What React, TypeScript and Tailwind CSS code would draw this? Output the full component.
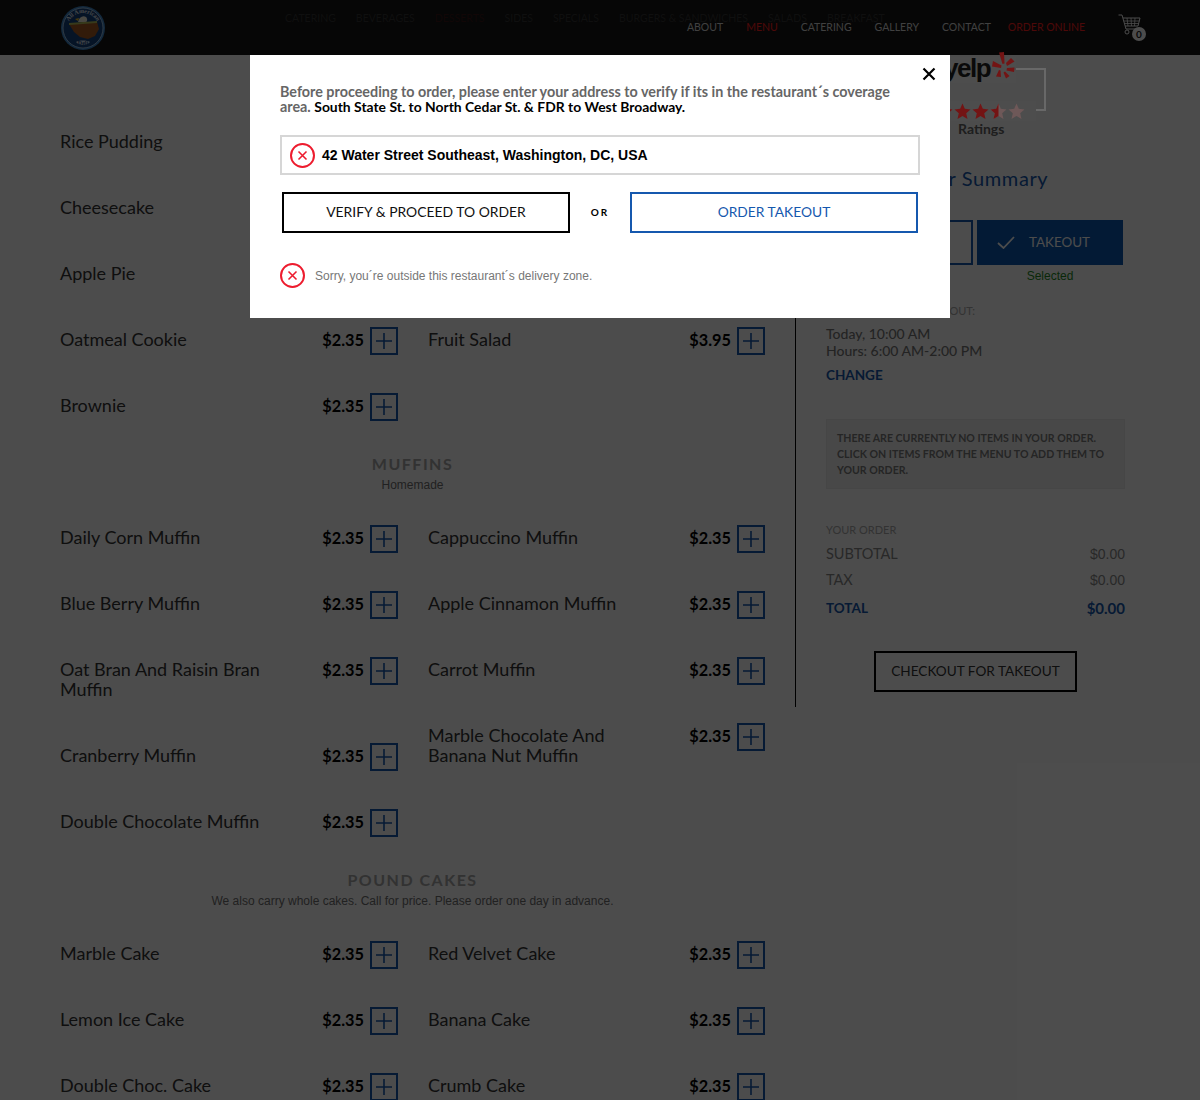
import React from "react";

const F = "font-['Lato','Noto_Sans',sans-serif]";

type Item = { n: string; p: string };

function Row({ n, p }: Item) {
  return (
    <div className="flex items-start mb-[46px]">
      <div className="flex-1 -mt-[1px] pb-[1px] pr-[30px] text-[18px] leading-[20px] text-[#333]">{n}</div>
      <div className="flex items-start h-[20px]">
        <span className="text-[16.3px] leading-[20px] font-bold text-black mr-[6px]">{p}</span>
        <button className="w-[28px] h-[28px] -mt-[3px] border-2 border-[#1558ae] flex items-center justify-center">
          <svg width="18" height="18" viewBox="0 0 18 18">
            <path d="M9 1V17M1 9H17" stroke="#1558ae" strokeWidth="1.6" />
          </svg>
        </button>
      </div>
    </div>
  );
}

function Heading({ t, s }: { t: string; s: string }) {
  return (
    <div className="h-[74px] -mt-[8px] text-center">
      <div className="h-[20px] text-[16px] leading-[20px] font-bold tracking-[1.5px] text-[#a8a8a8]">{t}</div>
      <div className="mt-[4px] h-[14px] text-[12px] leading-[14px] text-[#6f6f6f] font-['Liberation_Sans',sans-serif]">{s}</div>
    </div>
  );
}

function Cols({ a, b, lead = 0 }: { a: Item[]; b: Item[]; lead?: number }) {
  return (
    <div className="flex gap-[30px]">
      <div className="w-[338px]">
        {a.map((i) => (
          <Row key={i.n} {...i} />
        ))}
      </div>
      <div className="w-[337px]">
        {lead > 0 && <div className="h-[198px]" />}
        {b.map((i) => (
          <Row key={i.n} {...i} />
        ))}
      </div>
    </div>
  );
}

function RedX() {
  return (
    <svg width="25" height="25" viewBox="0 0 25 25" className="shrink-0">
      <circle cx="12.5" cy="12.5" r="11.5" fill="none" stroke="#ed1c2e" strokeWidth="2" />
      <path d="M8.5 8.5L16.5 16.5M16.5 8.5L8.5 16.5" stroke="#ed1c2e" strokeWidth="1.6" />
    </svg>
  );
}

function Star({ half, pale }: { half?: boolean; pale?: boolean }) {
  const d = "M8.5 0.5L10.8 5.8L16.5 6.4L12.2 10.2L13.5 16L8.5 13L3.5 16L4.8 10.2L0.5 6.4L6.2 5.8Z";
  return (
    <svg width="17" height="17" viewBox="0 0 17 17" className="shrink-0">
      <path d={d} fill={pale || half ? "#6e5858" : "#731414"} />
      {half && <path d="M8.5 0.5L6.2 5.8L0.5 6.4L4.8 10.2L3.5 16L8.5 13Z" fill="#731414" />}
    </svg>
  );
}

function Logo() {
  return (
    <svg width="46" height="46" viewBox="0 0 46 46">
      <circle cx="23" cy="23" r="22" fill="#3f86c8" />
      <circle cx="23" cy="23" r="20" fill="#16447f" stroke="#b9d4ec" strokeWidth="0.8" />
      <path d="M9 19L37 17L39 24L35 31L28 34L20 32L14 27Z" fill="#a85a22" />
      <path d="M18 17C19 12 23 10 26 12C28 14 27 17 26 17Z" fill="#f4f0e0" />
      <path d="M19 13L15 14L18 16Z" fill="#f3c22b" />
      <path d="M9 18L37 16L37 18L9 20Z" fill="#b8c25a" />
      <path d="M16 37C19 35 27 35 30 37C27 41 19 41 16 37Z" fill="#cfe0ef" />
      <defs>
        <path id="logoArc" d="M7 24A16 16 0 0 1 39 24" />
      </defs>
      <text fontSize="6" fontWeight="700" fill="#e8eef5" fontFamily="Liberation Serif, serif">
        <textPath href="#logoArc" startOffset="50%" textAnchor="middle">All American</textPath>
      </text>
      <text x="23" y="40" fontSize="6" fontWeight="700" fill="#16447f" textAnchor="middle" fontFamily="Liberation Serif, serif">Deli</text>
    </svg>
  );
}

function Cart() {
  return (
    <div className="relative w-[28px] h-[24px]">
      <svg width="24" height="22" viewBox="0 0 24 22" fill="none" stroke="#fff" strokeWidth="1">
        <path d="M0.5 1H4L8 15H20" />
        <path d="M5 4H22L20 12H7.2" />
        <path d="M9 4L10 12M13 4L13.5 12M17 4L16.5 12M5.8 7H21.4M6.6 9.5H20.8" strokeWidth="0.8" />
        <circle cx="9" cy="18" r="2" />
      </svg>
      <div className="absolute right-0 bottom-[-3px] w-[14px] h-[14px] rounded-full bg-white text-[#222] text-[10px] leading-[14px] font-bold text-center">0</div>
    </div>
  );
}

const s1: Item[] = [
  { n: "Rice Pudding", p: "$2.35" },
  { n: "Cheesecake", p: "$2.35" },
  { n: "Apple Pie", p: "$2.35" },
  { n: "Oatmeal Cookie", p: "$2.35" },
  { n: "Brownie", p: "$2.35" },
];
const m1: Item[] = [
  { n: "Daily Corn Muffin", p: "$2.35" },
  { n: "Blue Berry Muffin", p: "$2.35" },
  { n: "Oat Bran And Raisin Bran Muffin", p: "$2.35" },
  { n: "Cranberry Muffin", p: "$2.35" },
  { n: "Double Chocolate Muffin", p: "$2.35" },
];
const m2: Item[] = [
  { n: "Cappuccino Muffin", p: "$2.35" },
  { n: "Apple Cinnamon Muffin", p: "$2.35" },
  { n: "Carrot Muffin", p: "$2.35" },
  { n: "Marble Chocolate And Banana Nut Muffin", p: "$2.35" },
];
const p1: Item[] = [
  { n: "Marble Cake", p: "$2.35" },
  { n: "Lemon Ice Cake", p: "$2.35" },
  { n: "Double Choc. Cake", p: "$2.35" },
];
const p2: Item[] = [
  { n: "Red Velvet Cake", p: "$2.35" },
  { n: "Banana Cake", p: "$2.35" },
  { n: "Crumb Cake", p: "$2.35" },
];

const nav = ["ABOUT", "MENU", "CATERING", "GALLERY", "CONTACT"];
const faint = ["CATERING", "BEVERAGES", "DESSERTS", "SIDES", "SPECIALS", "BURGERS & SANDWICHES", "SALADS", "BREAKFAST"];

export default function App() {
  return (
    <div className={`relative h-[1100px] overflow-hidden bg-white ${F}`}>
      <header className="relative h-[55px] bg-[#141414] flex items-center pl-[60px] pr-[54px] z-10">
        <Logo />
        <div className="absolute left-[285px] top-[11px] flex gap-[20px] text-[10.5px] leading-[14px] text-[#333]">
          {faint.map((f) => (
            <span key={f} className={f === "DESSERTS" ? "text-[#3a1414]" : ""}>{f}</span>
          ))}
        </div>
        <nav className="relative ml-auto flex items-center gap-[23px] text-[10.5px] text-[#d8d8d8]">
          {nav.map((n) => (
            <span key={n} className={n === "MENU" ? "text-[#ff1f1f]" : ""}>{n}</span>
          ))}
          <span className="-ml-[6px] text-[#ff1f1f]">ORDER ONLINE</span>
        </nav>
        <div className="relative ml-[33px] -mt-[3px]">
          <Cart />
        </div>
      </header>

      <div className="flex pl-[60px]">
        <main className="w-[705px] pt-[77px]">
          <Cols a={s1} b={[{ n: "Fruit Salad", p: "$3.95" }]} lead={1} />
          <Heading t="MUFFINS" s="Homemade" />
          <Cols a={m1} b={m2} />
          <Heading t="POUND CAKES" s="We also carry whole cakes. Call for price. Please order one day in advance." />
          <Cols a={p1} b={p2} />
        </main>

        <aside className="ml-[30px] w-[330px] h-[652px] border-l border-black pl-[30px]">
          <div className="relative z-[25] h-[111px]">
            <div className="absolute left-[79px] top-[13px] w-[141px] h-[43px] border-2 border-[#686868]" />
            <div className="absolute left-[110px] top-[2px] w-[80px] h-[26px] bg-[#4d4d4d] flex items-center">
              <span className="ml-[8px] -mt-[4px] text-[26px] leading-[26px] font-bold text-[#0a0a0a] font-['Liberation_Sans',sans-serif] tracking-[-1.5px]">yelp</span>
              <svg width="24" height="27" viewBox="0 0 24 27" className="absolute left-[55px] -top-[5px]">
                <g fill="#731414">
                  <path d="M8 0.5L13 0L13.5 11.5L11.5 12Z" />
                  <path d="M15 11L20 6L23.5 9.5L16 14Z" />
                  <path d="M16 16L23.5 15.5L23 20L15.5 18.5Z" />
                  <path d="M14 19.5L18.5 24L15 26.5L12.5 20.5Z" />
                  <path d="M2 9L10.5 13.5L10 16L1 14.5Z" />
                  <path d="M9.5 18.5L10 25L5 24.5L8 18Z" />
                </g>
              </svg>
            </div>
            <div className="absolute left-[110px] top-[46px] h-[20px] pr-[11px] bg-[#4d4d4d] flex items-center gap-[1px]">
              <Star />
              <Star />
              <Star />
              <Star half />
              <Star pale />
            </div>
          </div>
          <div className="-mt-[45px] h-[45px] pl-[132px] text-[14px] leading-[16px] font-bold text-[#666]">Ratings</div>
          <div className="h-[26px] pl-[28px] whitespace-nowrap text-[20px] leading-[24px] text-[#1558ae] tracking-[0.6px]">Your Order Summary</div>
          <div className="mt-[28px] flex gap-[4px] pl-[1px]">
            <div className="w-[146px] h-[45px] border-2 border-[#1558ae]" />
            <div className="w-[146px] h-[45px] pb-[1px] bg-[#0a58b2] flex items-center pl-[20px] text-white text-[13.4px]">
              <svg width="18" height="13" viewBox="0 0 18 13" className="mr-[14px]">
                <path d="M1 7L6.5 12L17 1" fill="none" stroke="#fff" strokeWidth="1.8" />
              </svg>
              TAKEOUT
            </div>
          </div>
          <div className="mt-[4px] pl-[149px] text-center text-[12px] leading-[14px] text-[#1f8a1f] font-['Liberation_Sans',sans-serif]">Selected</div>
          <div className="mt-[21px] h-[14px] w-[149px] text-right text-[11px] leading-[14px] text-[#aaa] whitespace-nowrap">FOR TAKEOUT:</div>
          <div className="mt-[7px] text-[14px] leading-[17px] text-[#777] font-medium">
            <div>Today, 10:00 AM</div>
            <div>Hours: 6:00 AM-2:00 PM</div>
          </div>
          <div className="mt-[8px] text-[13.5px] leading-[16px] font-bold text-[#1558ae]">CHANGE</div>
          <div className="mt-[36px] w-[299px] h-[70px] bg-[#f2f2f2] border border-[#ececec] px-[10px] py-[10px] text-[10.6px] leading-[16px] font-bold text-[#7c7c7c]">
            THERE ARE CURRENTLY NO ITEMS IN YOUR ORDER. CLICK ON ITEMS FROM THE MENU TO ADD THEM TO YOUR ORDER.
          </div>
          <div className="mt-[34px] h-[14px] text-[11px] leading-[14px] text-[#aaa]">YOUR ORDER</div>
          <div className="w-[299px] mt-[7px] flex justify-between text-[14.5px] leading-[20px] text-[#888]">
            <span>SUBTOTAL</span>
            <span className="font-['Liberation_Sans',sans-serif] text-[14px]">$0.00</span>
          </div>
          <div className="w-[299px] mt-[6px] flex justify-between text-[14.5px] leading-[20px] text-[#888]">
            <span>TAX</span>
            <span className="font-['Liberation_Sans',sans-serif] text-[14px]">$0.00</span>
          </div>
          <div className="w-[299px] mt-[8px] flex justify-between text-[13.5px] leading-[20px] font-bold text-[#1558ae]">
            <span>TOTAL</span>
            <span className="text-[15px]">$0.00</span>
          </div>
          <div className="w-[299px] mt-[33px] flex justify-center">
            <div className="w-[203px] h-[41px] border-2 border-black flex items-center justify-center text-[13.6px] text-[#333]">CHECKOUT FOR TAKEOUT</div>
          </div>
        </aside>
      </div>

      <div className="absolute inset-0 z-20 bg-black/70" />

      <div className="absolute left-[250px] top-[55px] z-30 w-[700px] h-[263px] bg-white px-[30px] pt-[29px]">
        <button className="absolute right-[14px] top-[12px] w-[14px] h-[14px]">
          <svg width="14" height="14" viewBox="0 0 14 14">
            <path d="M1.5 1.5L12.5 12.5M12.5 1.5L1.5 12.5" stroke="#000" strokeWidth="2.2" />
          </svg>
        </button>
        <p className="text-[14.35px] leading-[15px] font-bold text-[#666]">
          Before proceeding to order, please enter your address to verify if its in the restaurant´s coverage area.{" "}
          <span className="text-black text-[13.9px]">South State St. to North Cedar St. &amp; FDR to West Broadway.</span>
        </p>
        <div className="mt-[21px] h-[40px] border-2 border-[#d6d6d6] flex items-center pl-[8px]">
          <RedX />
          <span className="ml-[7px] text-[14px] font-bold text-black font-['Liberation_Sans',sans-serif]">42 Water Street Southeast, Washington, DC, USA</span>
        </div>
        <div className="mt-[17px] flex items-center px-[2px]">
          <div className="w-[288px] h-[41px] pb-[1px] border-2 border-black flex items-center justify-center text-[13.9px] text-[#111]">VERIFY &amp; PROCEED TO ORDER</div>
          <div className="w-[60px] text-center text-[10px] font-bold tracking-[2px] text-black">OR</div>
          <div className="w-[288px] h-[41px] pb-[1px] border-2 border-[#1558ae] flex items-center justify-center text-[13.8px] text-[#1558ae]">ORDER TAKEOUT</div>
        </div>
        <div className="mt-[30px] flex items-center">
          <RedX />
          <span className="ml-[10px] text-[12px] text-[#777] font-['Liberation_Sans',sans-serif]">Sorry, you´re outside this restaurant´s delivery zone.</span>
        </div>
      </div>
    </div>
  );
}
